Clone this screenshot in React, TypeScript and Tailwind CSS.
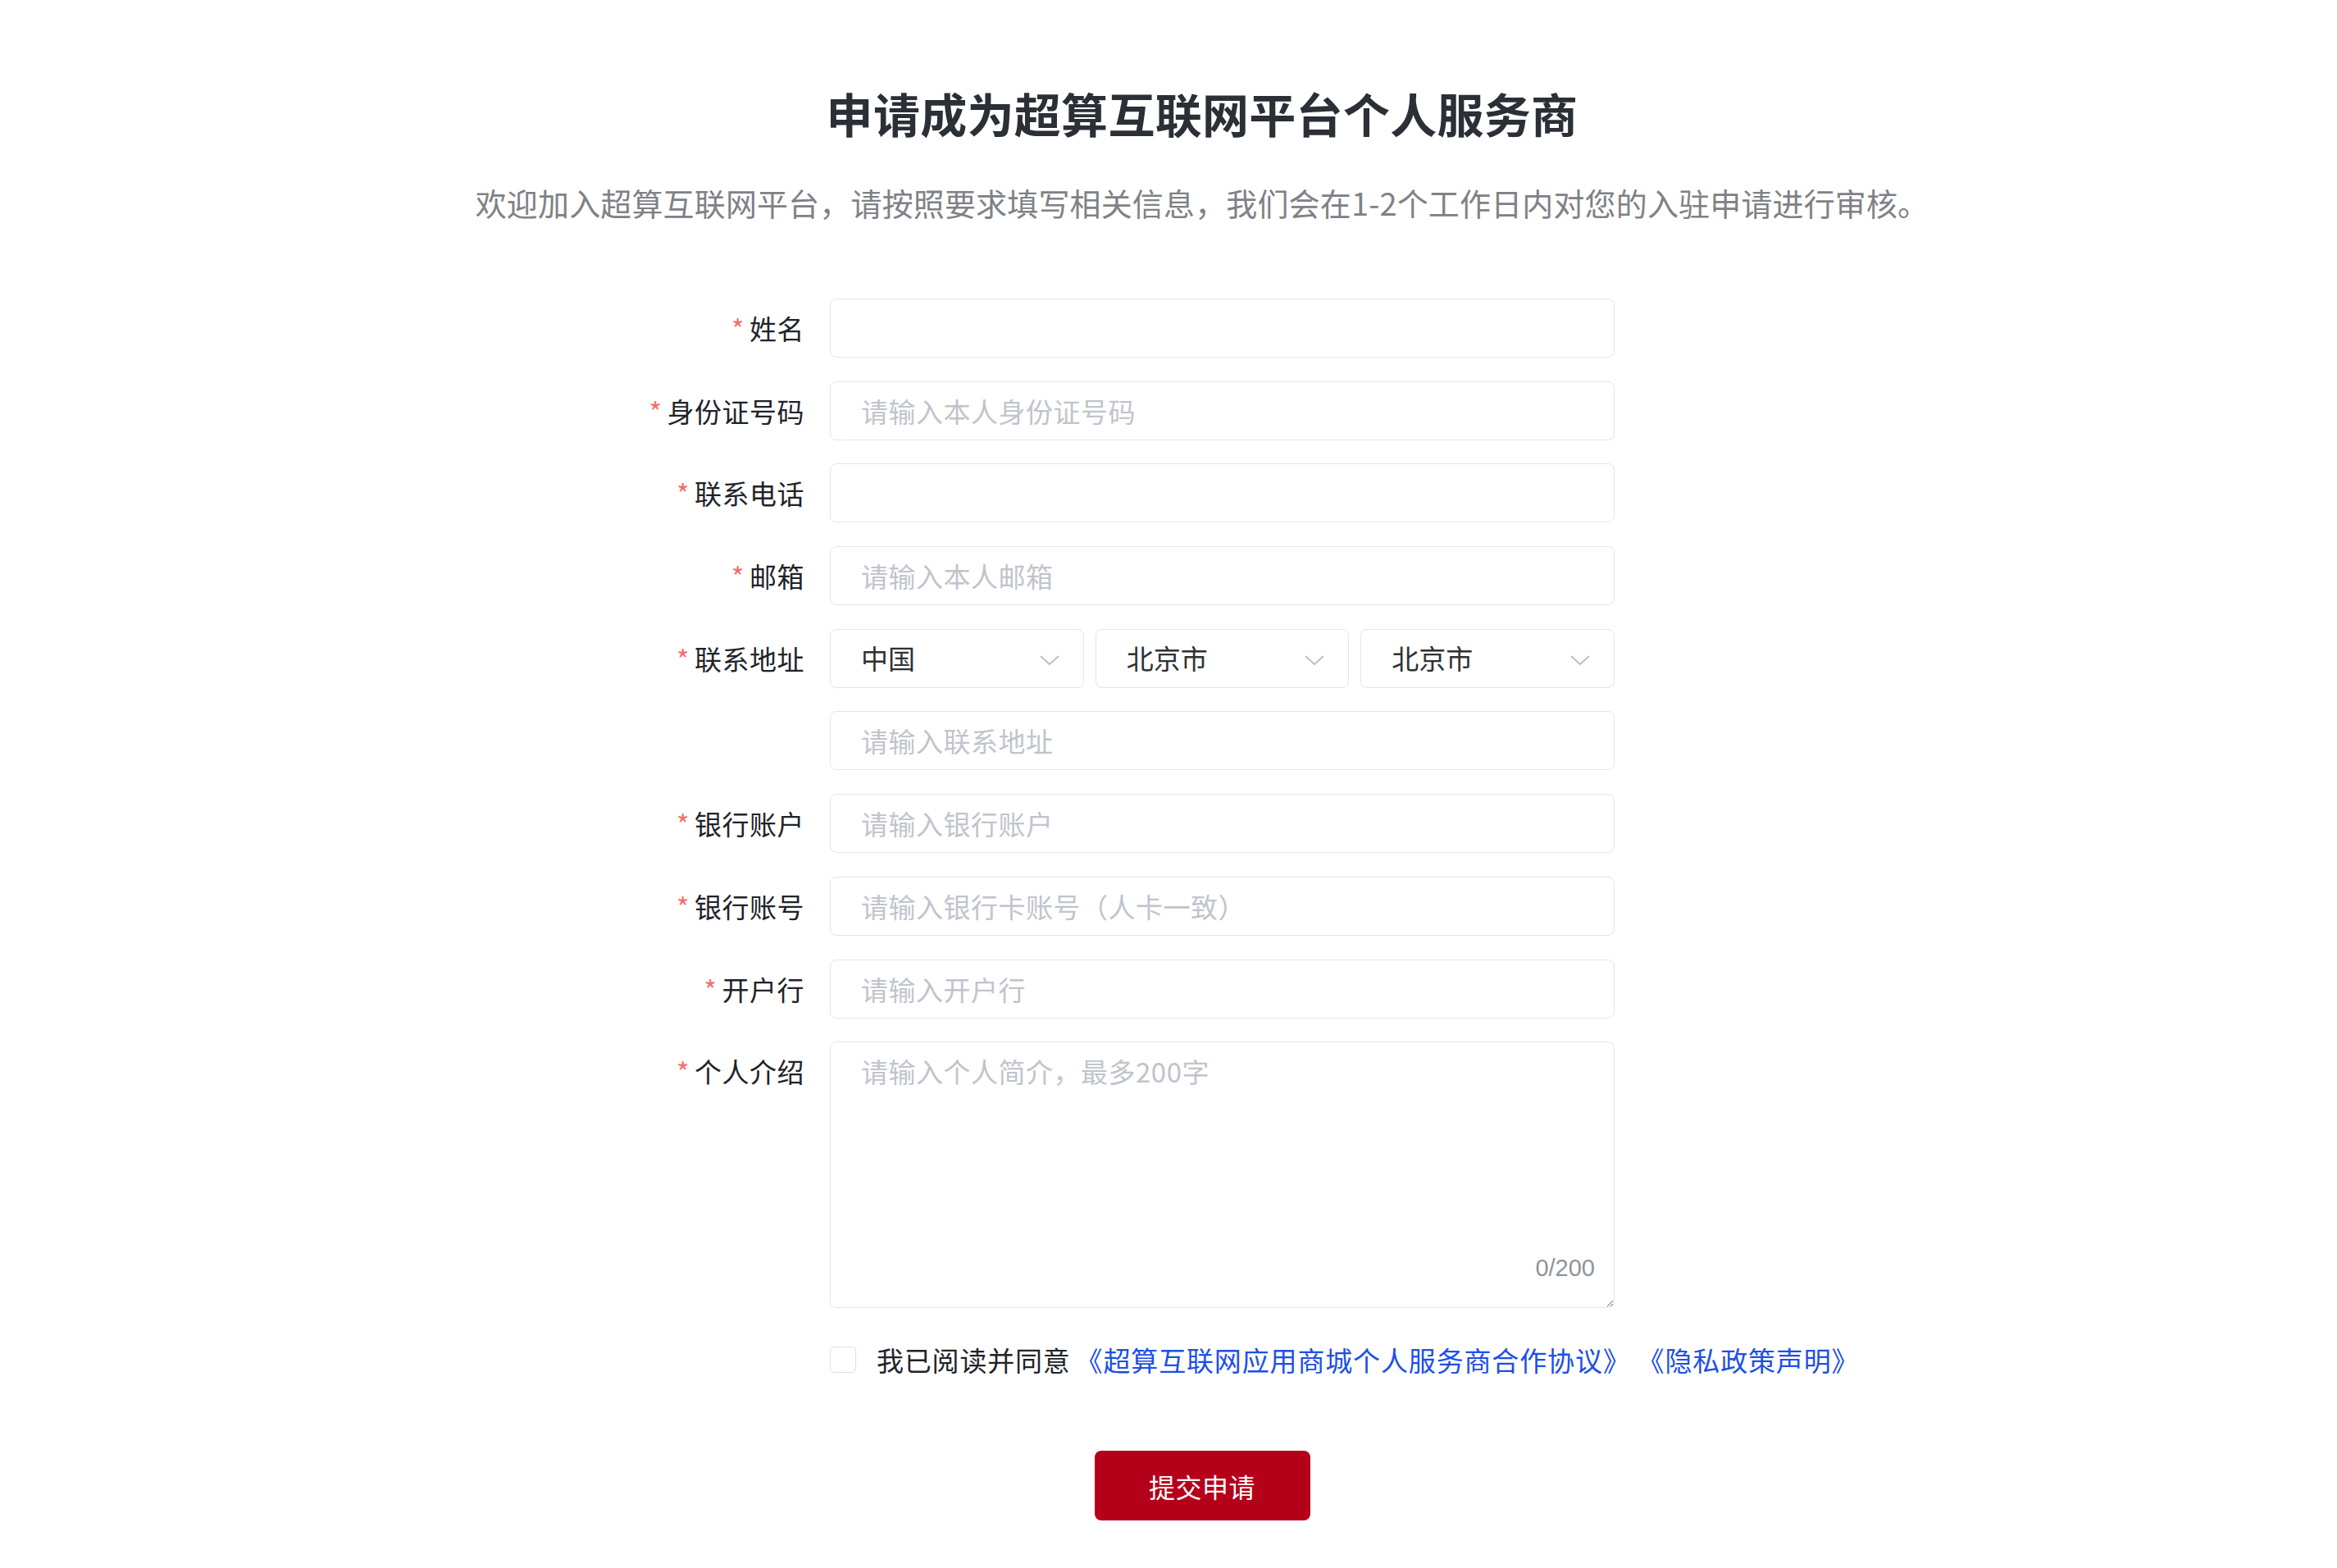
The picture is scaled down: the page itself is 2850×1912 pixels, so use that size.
const FONT = "font-['Noto_Sans_CJK_SC','Noto_Sans',sans-serif]"

type Field = { label: string; placeholder?: string; kind?: 'input' | 'address' | 'detail' }

const FIELDS: Field[] = [
  { label: '姓名' },
  { label: '身份证号码', placeholder: '请输入本人身份证号码' },
  { label: '联系电话' },
  { label: '邮箱', placeholder: '请输入本人邮箱' },
  { label: '联系地址', kind: 'address' },
  { label: '', placeholder: '请输入联系地址', kind: 'detail' },
  { label: '银行账户', placeholder: '请输入银行账户' },
  { label: '银行账号', placeholder: '请输入银行卡账号（人卡一致）' },
  { label: '开户行', placeholder: '请输入开户行' },
]

function Chevron() {
  return (
    <svg width="26" height="14" viewBox="0 0 26 14" fill="none" className="mt-[4px]">
      <polyline points="2,2 13,12 24,2" stroke="#b9bdc6" strokeWidth="1.8" />
    </svg>
  )
}

function Label({ text }: { text: string }) {
  return (
    <div className="w-[200px] shrink-0 text-right text-[33px] leading-[72px] tracking-[0.5px] text-[#1f2329]">
      {text && (
        <>
          <span className="mr-[6px] text-[#f56c6c]">*</span>
          {text}
        </>
      )}
    </div>
  )
}

function Select({ value }: { value: string }) {
  return (
    <div className="flex h-[72px] flex-1 items-center justify-between rounded-[8px] border border-[#e2e5ea] bg-white pl-[37px] pr-[28px]">
      <span className="text-[33px] text-[#303133]">{value}</span>
      <Chevron />
    </div>
  )
}

function Row({ field }: { field: Field }) {
  return (
    <div className="flex items-start gap-[31px]">
      <Label text={field.label} />
      {field.kind === 'address' ? (
        <div className="flex w-[957px] gap-[14px]">
          <Select value="中国" />
          <Select value="北京市" />
          <Select value="北京市" />
        </div>
      ) : (
        <input
          className="h-[72px] w-[957px] rounded-[8px] border border-[#e2e5ea] bg-white pl-[37px] text-[33px] tracking-[0.5px] text-[#303133] outline-none placeholder:text-[#c0c4cc]"
          placeholder={field.placeholder}
        />
      )}
    </div>
  )
}

export default function App() {
  return (
    <div className={`${FONT} min-h-[1912px] w-full bg-white`}>
      <div className="flex flex-col items-center pl-[82px] pt-[98px]">
        <h1 className="text-[57px] font-bold leading-[78px] tracking-[0.3px] text-[#2b2f36]">申请成为超算互联网平台个人服务商</h1>
        <p className="mt-[44px] text-[38px] leading-[54px] tracking-[0.15px] text-[#7f8185]">
          欢迎加入超算互联网平台，请按照要求填写相关信息，我们会在1-2个工作日内对您的入驻申请进行审核。
        </p>
      </div>

      <div className="ml-[781px] mt-[90px] flex flex-col gap-[28.7px]">
        {FIELDS.map((f, i) => (
          <Row key={i} field={f} />
        ))}
        <div className="flex items-start gap-[31px]">
          <Label text="个人介绍" />
          <div className="relative">
            <textarea
              className="block h-[325px] w-[957px] resize-y rounded-[8px] border border-[#e2e5ea] bg-white pl-[37px] pt-[13px] text-[33px] leading-[44px] tracking-[0.5px] text-[#303133] outline-none placeholder:text-[#c0c4cc]"
              placeholder="请输入个人简介，最多200字"
            />
            <span className="absolute bottom-[33px] right-[24px] font-['Liberation_Sans',sans-serif] text-[29px] leading-[32px] text-[#909399]">
              0/200
            </span>
          </div>
        </div>
      </div>

      <div className="ml-[1012px] mt-[46px] flex items-center">
        <span className="h-[32px] w-[32px] shrink-0 rounded-[5px] border border-[#dcdfe6] bg-white" />
        <span className="ml-[25px] text-[33px] leading-[34px] tracking-[0.8px] text-[#1f2329]">我已阅读并同意</span>
        <span className="ml-[6px] text-[33px] leading-[34px] tracking-[0.85px] text-[#1d4fe6]">《超算互联网应用商城个人服务商合作协议》</span>
        <span className="ml-[8px] text-[33px] leading-[34px] tracking-[0.85px] text-[#1d4fe6]">《隐私政策声明》</span>
      </div>

      <div className="mt-[94px] flex justify-center pl-[82px]">
        <button className="h-[85px] w-[263px] rounded-[8px] bg-[#b5001a] text-[32px] tracking-[0.5px] text-white">提交申请</button>
      </div>
    </div>
  )
}
